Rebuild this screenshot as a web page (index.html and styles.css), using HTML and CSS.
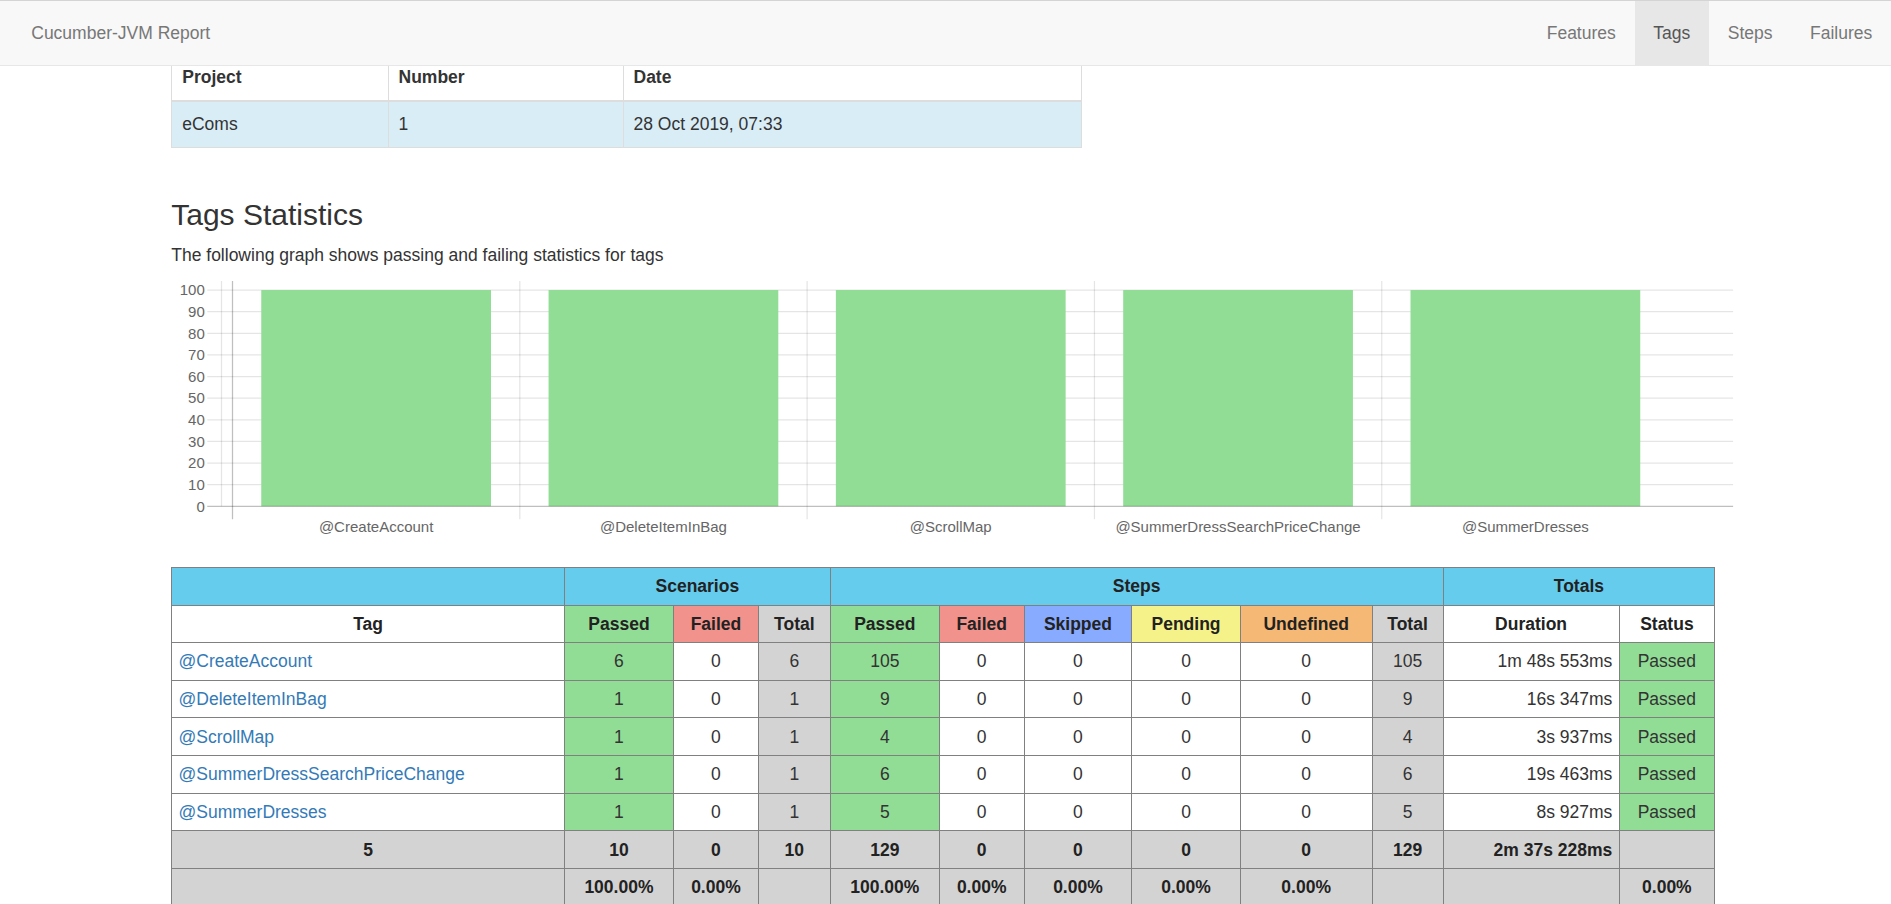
FILE: index.html
```html
<!DOCTYPE html>
<html lang="en">
<head>
<meta charset="utf-8">
<title>Cucumber-JVM Report - Tags Overview</title>
<link rel="stylesheet" href="styles.css">
</head>
<body>
<nav class="navbar">
  <a class="brand" href="#">Cucumber-JVM Report</a>
  <ul class="nav">
    <li><a href="#">Features</a></li>
    <li class="active"><a href="#">Tags</a></li>
    <li><a href="#">Steps</a></li>
    <li><a href="#">Failures</a></li>
  </ul>
</nav>
<main class="container">
  <table class="lead-table">
    <colgroup><col class="c-project"><col class="c-number"><col class="c-date"></colgroup>
    <thead><tr><th>Project</th><th>Number</th><th>Date</th></tr></thead>
    <tbody><tr class="info"><td>eComs</td><td>1</td><td>28 Oct 2019, 07:33</td></tr></tbody>
  </table>

  <h3 class="title">Tags Statistics</h3>
  <p class="intro">The following graph shows passing and failing statistics for tags</p>

  <svg class="chart" width="1255" height="209" viewBox="0 0 1255 209">
    <g class="grid">
      <line x1="29" y1="7.2" x2="1249.7" y2="7.2"/>
      <line x1="29" y1="24.5" x2="1249.7" y2="24.5"/>
      <line x1="29" y1="41.8" x2="1249.7" y2="41.8"/>
      <line x1="29" y1="59.1" x2="1249.7" y2="59.1"/>
      <line x1="29" y1="76.4" x2="1249.7" y2="76.4"/>
      <line x1="29" y1="93.7" x2="1249.7" y2="93.7"/>
      <line x1="29" y1="111" x2="1249.7" y2="111"/>
      <line x1="29" y1="128.3" x2="1249.7" y2="128.3"/>
      <line x1="29" y1="145.6" x2="1249.7" y2="145.6"/>
      <line x1="29" y1="162.9" x2="1249.7" y2="162.9"/>
      <line x1="40.4" y1="0" x2="40.4" y2="180.2"/>
      <line x1="279.05" y1="0" x2="279.05" y2="190.6"/>
      <line x1="508.9" y1="0" x2="508.9" y2="190.6"/>
      <line x1="738.75" y1="0" x2="738.75" y2="190.6"/>
      <line x1="968.6" y1="0" x2="968.6" y2="190.6"/>
    </g>
    <g class="bars">
      <rect x="72.2" y="7.2" width="183.8" height="173"/>
      <rect x="302.05" y="7.2" width="183.8" height="173"/>
      <rect x="531.9" y="7.2" width="183.8" height="173"/>
      <rect x="761.75" y="7.2" width="183.8" height="173"/>
      <rect x="991.6" y="7.2" width="183.8" height="173"/>
    </g>
    <g class="zero">
      <line x1="29" y1="180.2" x2="1249.7" y2="180.2"/>
      <line x1="49.2" y1="0" x2="49.2" y2="190.6"/>
    </g>
    <g class="ylabels">
      <text x="27" y="11.4">100</text>
      <text x="27" y="28.7">90</text>
      <text x="27" y="46">80</text>
      <text x="27" y="63.3">70</text>
      <text x="27" y="80.6">60</text>
      <text x="27" y="97.9">50</text>
      <text x="27" y="115.2">40</text>
      <text x="27" y="132.5">30</text>
      <text x="27" y="149.8">20</text>
      <text x="27" y="167.1">10</text>
      <text x="27" y="184.4">0</text>
    </g>
    <g class="xlabels">
      <text x="164.1" y="201">@CreateAccount</text>
      <text x="393.95" y="201">@DeleteItemInBag</text>
      <text x="623.8" y="201">@ScrollMap</text>
      <text x="853.65" y="201">@SummerDressSearchPriceChange</text>
      <text x="1083.5" y="201">@SummerDresses</text>
    </g>
  </svg>

  <table class="stats-table">
    <colgroup>
      <col class="w-tag"><col class="w-spass"><col class="w-sfail"><col class="w-stot">
      <col class="w-pass"><col class="w-fail"><col class="w-skip"><col class="w-pend">
      <col class="w-undef"><col class="w-tot"><col class="w-dur"><col class="w-status">
    </colgroup>
    <thead>
      <tr>
        <th class="header"></th>
        <th class="header" colspan="3">Scenarios</th>
        <th class="header" colspan="6">Steps</th>
        <th class="header" colspan="2">Totals</th>
      </tr>
      <tr>
        <th>Tag</th>
        <th class="passed">Passed</th>
        <th class="failed">Failed</th>
        <th class="total">Total</th>
        <th class="passed">Passed</th>
        <th class="failed">Failed</th>
        <th class="skipped">Skipped</th>
        <th class="pending">Pending</th>
        <th class="undefined">Undefined</th>
        <th class="total">Total</th>
        <th>Duration</th>
        <th>Status</th>
      </tr>
    </thead>
    <tbody>
      <tr>
        <td class="tagname"><a href="#">@CreateAccount</a></td>
        <td class="passed">6</td><td>0</td><td class="total">6</td>
        <td class="passed">105</td><td>0</td><td>0</td><td>0</td><td>0</td><td class="total">105</td>
        <td class="duration">1m 48s 553ms</td><td class="passed">Passed</td>
      </tr>
      <tr>
        <td class="tagname"><a href="#">@DeleteItemInBag</a></td>
        <td class="passed">1</td><td>0</td><td class="total">1</td>
        <td class="passed">9</td><td>0</td><td>0</td><td>0</td><td>0</td><td class="total">9</td>
        <td class="duration">16s 347ms</td><td class="passed">Passed</td>
      </tr>
      <tr>
        <td class="tagname"><a href="#">@ScrollMap</a></td>
        <td class="passed">1</td><td>0</td><td class="total">1</td>
        <td class="passed">4</td><td>0</td><td>0</td><td>0</td><td>0</td><td class="total">4</td>
        <td class="duration">3s 937ms</td><td class="passed">Passed</td>
      </tr>
      <tr>
        <td class="tagname"><a href="#">@SummerDressSearchPriceChange</a></td>
        <td class="passed">1</td><td>0</td><td class="total">1</td>
        <td class="passed">6</td><td>0</td><td>0</td><td>0</td><td>0</td><td class="total">6</td>
        <td class="duration">19s 463ms</td><td class="passed">Passed</td>
      </tr>
      <tr>
        <td class="tagname"><a href="#">@SummerDresses</a></td>
        <td class="passed">1</td><td>0</td><td class="total">1</td>
        <td class="passed">5</td><td>0</td><td>0</td><td>0</td><td>0</td><td class="total">5</td>
        <td class="duration">8s 927ms</td><td class="passed">Passed</td>
      </tr>
    </tbody>
    <tfoot>
      <tr>
        <td>5</td>
        <td>10</td><td>0</td><td>10</td>
        <td>129</td><td>0</td><td>0</td><td>0</td><td>0</td><td>129</td>
        <td class="duration">2m 37s 228ms</td><td></td>
      </tr>
      <tr>
        <td></td>
        <td>100.00%</td><td>0.00%</td><td></td>
        <td>100.00%</td><td>0.00%</td><td>0.00%</td><td>0.00%</td><td>0.00%</td><td></td>
        <td></td><td>0.00%</td>
      </tr>
    </tfoot>
  </table>
</main>
</body>
</html>
```

FILE: styles.css
```css
html {
  zoom: 1.25;
}

body {
  margin: 0;
  padding-top: 43px;
  font-family: "Liberation Sans", Arial, Helvetica, sans-serif;
  font-size: 14px;
  line-height: 1.42857;
  color: #333;
  background: #fff;
}

a {
  color: #337ab7;
  text-decoration: none;
}

/* ---------- navbar ---------- */
.navbar {
  position: fixed;
  top: 0;
  left: 0;
  right: 0;
  z-index: 10;
  height: 51px;
  display: flex;
  justify-content: space-between;
  background: #f8f8f8;
  border-top: 1px solid #d4d4d4;
  border-bottom: 1px solid #e7e7e7;
}

.brand {
  padding: 16px 0 15px 25px;
  font-size: 14px;
  line-height: 20px;
  color: #777;
}

.nav {
  display: flex;
  list-style: none;
  margin: 0;
  padding: 0;
}

.nav a {
  display: block;
  padding: 16px 15px 15px;
  line-height: 20px;
  color: #777;
}

.nav .active a {
  background: #e7e7e7;
  color: #555;
}

/* ---------- content ---------- */
.container {
  width: 1235px;
  margin-left: 137px;
}

.lead-table {
  width: 728px;
  table-layout: fixed;
  border-collapse: collapse;
  margin-bottom: 40px;
}

.c-project { width: 173px; }
.c-number { width: 188px; }
.c-date { width: 367px; }

.lead-table th,
.lead-table td {
  padding: 8px;
  line-height: 20px;
  text-align: left;
  border: 1px solid #ddd;
}

.lead-table th {
  border-bottom: 2px solid #ddd;
  font-weight: bold;
}

.lead-table .info td {
  background: #d9edf7;
}

.title {
  margin: 20px 0 10px;
  font-size: 24px;
  font-weight: 500;
  line-height: 1.1;
}

.intro {
  margin: 0 0 10px;
}

/* ---------- chart ---------- */
.chart {
  display: block;
  overflow: visible;
}

.chart .grid line {
  stroke: rgba(0, 0, 0, 0.1);
  stroke-width: 1;
}

.chart .zero line {
  stroke: rgba(0, 0, 0, 0.25);
  stroke-width: 1;
}

.chart .bars rect {
  fill: #92dd96;
}

.chart text {
  font-family: "Liberation Sans", Arial, Helvetica, sans-serif;
  font-size: 12px;
  fill: #666;
}

.chart .ylabels text {
  text-anchor: end;
}

.chart .xlabels text {
  text-anchor: middle;
}

/* ---------- stats table ---------- */
.stats-table {
  width: 1234.3px;
  margin-top: 20px;
  table-layout: fixed;
  border-collapse: collapse;
}

.w-tag { width: 314.1px; }
.w-spass { width: 87.3px; }
.w-sfail { width: 67.9px; }
.w-stot { width: 57.5px; }
.w-pass { width: 87.2px; }
.w-fail { width: 67.85px; }
.w-skip { width: 86.15px; }
.w-pend { width: 86.8px; }
.w-undef { width: 105.4px; }
.w-tot { width: 56.8px; }
.w-dur { width: 140.8px; }
.w-status { width: 76.5px; }

.stats-table th,
.stats-table td {
  border: 1px solid gray;
  padding: 5px;
  line-height: 19.3px;
  text-align: center;
  white-space: nowrap;
}

.stats-table th {
  font-weight: bold;
  color: #222;
}

.stats-table td.tagname {
  text-align: left;
}

.stats-table td.duration {
  text-align: right;
}

.stats-table tfoot td {
  background: #d3d3d3;
  font-weight: bold;
  color: #222;
}

.header { background: #66ccee; }
.passed { background: #92dd96; }
.failed { background: #f2928c; }
.skipped { background: #88aaff; }
.pending { background: #f5f28a; }
.undefined { background: #f5b975; }
.total { background: #d3d3d3; }
```
